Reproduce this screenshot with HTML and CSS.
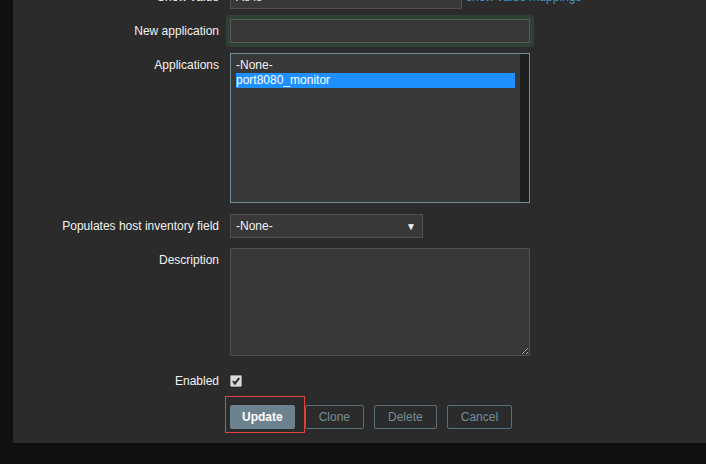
FILE: index.html
```html
<!DOCTYPE html>
<html lang="en">
<head>
  <meta charset="UTF-8">
  <title>Item</title>
  <link rel="stylesheet" href="styles.css">
</head>
<body>
  <div class="panel">
    <div class="form">

      <div class="row">
        <label class="lbl">Show value</label>
        <div class="field inline">
          <input class="txt w-show" type="text" value="As is">
          <a class="link" href="#">show value mappings</a>
        </div>
      </div>

      <div class="row">
        <label class="lbl">New application</label>
        <div class="field">
          <input class="txt w-wide focus" type="text" value="">
        </div>
      </div>

      <div class="row gap-11">
        <label class="lbl">Applications</label>
        <div class="field">
          <div class="listbox">
            <div class="options">
              <div class="opt">-None-</div>
              <div class="opt sel">port8080_monitor</div>
            </div>
            <div class="track"></div>
          </div>
        </div>
      </div>

      <div class="row">
        <label class="lbl">Populates host inventory field</label>
        <div class="field">
          <div class="select">
            <span>-None-</span>
            <span class="arrow">&#9660;</span>
          </div>
        </div>
      </div>

      <div class="row gap-13">
        <label class="lbl">Description</label>
        <div class="field">
          <textarea class="area"></textarea>
        </div>
      </div>

      <div class="row gap-12">
        <label class="lbl">Enabled</label>
        <div class="field">
          <span class="check">
            <svg width="12" height="12" viewBox="0 0 12 12">
              <rect x="0.5" y="0.5" width="11" height="11" rx="1" fill="#d9d9d9" stroke="#9a9a9a"/>
              <path d="M3 6.2 L5 8.6 L9.2 3" fill="none" stroke="#2b2b2b" stroke-width="2"/>
            </svg>
          </span>
        </div>
      </div>

      <div class="row">
        <span></span>
        <div class="buttons">
          <span class="mark"><button class="btn primary">Update</button></span>
          <button class="btn alt">Clone</button>
          <button class="btn alt">Delete</button>
          <button class="btn alt">Cancel</button>
        </div>
      </div>

    </div>
  </div>
</body>
</html>
```

FILE: styles.css
```css
html, body { margin: 0; padding: 0; }
body { background: #0e1012; font-family: "Liberation Sans", Arial, sans-serif; font-size: 12px; color: #f2f2f2; }

.panel { margin-left: 13px; height: 443px; background: #2b2b2b; overflow: hidden; }
.form { margin-top: -15px; }

.row { display: grid; grid-template-columns: 206px auto; column-gap: 11px; margin-bottom: 10px; }
.row.gap-11 { margin-bottom: 11px; }
.row.gap-12 { margin-bottom: 12px; }
.row.gap-13 { margin-bottom: 13px; }

.lbl { text-align: right; line-height: 24px; color: #f2f2f2; white-space: nowrap; }
.field { display: flex; align-items: flex-start; }
.field.inline { align-items: center; gap: 4px; }

.txt { box-sizing: border-box; height: 24px; margin: 0; padding: 0 5px; background: #383838; border: 1px solid #4f4f4f; color: #f2f2f2; font: inherit; outline: none; }
.w-show { width: 232px; }
.w-wide { width: 300px; }
.focus { border-color: #555a56; box-shadow: 0 0 0 4px #2f4135; border-radius: 1px; }
.link { color: #4796c4; text-decoration: none; }

.listbox { box-sizing: border-box; width: 300px; height: 150px; display: flex; border: 1px solid #768d99; background: #383838; }
.options { flex: 1; padding: 4px 5px 0 5px; }
.opt { height: 15px; line-height: 15px; color: #f2f2f2; white-space: nowrap; }
.opt.sel { background: #1e90ff; color: #fff; }
.track { width: 9px; background: #1f1f1f; }

.select { box-sizing: border-box; width: 193px; height: 24px; display: flex; align-items: center; justify-content: space-between; padding: 0 6px 0 5px; background: #383838; border: 1px solid #4f4f4f; color: #f2f2f2; }
.arrow { font-size: 10px; color: #f2f2f2; }

.area { box-sizing: border-box; width: 300px; height: 108px; margin: 0; display: block; background: #383838; border: 1px solid #4f4f4f; color: #f2f2f2; resize: vertical; outline: none; }

.check { display: block; width: 12px; height: 12px; margin-top: 6px; }
.check svg { display: block; }

.buttons { display: flex; gap: 10px; }
.btn { box-sizing: border-box; height: 24px; padding: 0 11px; border-radius: 2px; font-family: inherit; font-size: 12px; cursor: pointer; }
.btn.primary { background: #6c838f; border: 1px solid #6c838f; color: #fff; font-weight: bold; }
.btn.alt { padding: 0 13px; background: transparent; border: 1px solid #5b707b; color: #768d99; }

.mark { position: relative; display: block; }
.mark::after { content: ""; position: absolute; left: -5px; top: -9px; right: -10px; bottom: -4px; border: 1px solid #e3403e; pointer-events: none; }
```
